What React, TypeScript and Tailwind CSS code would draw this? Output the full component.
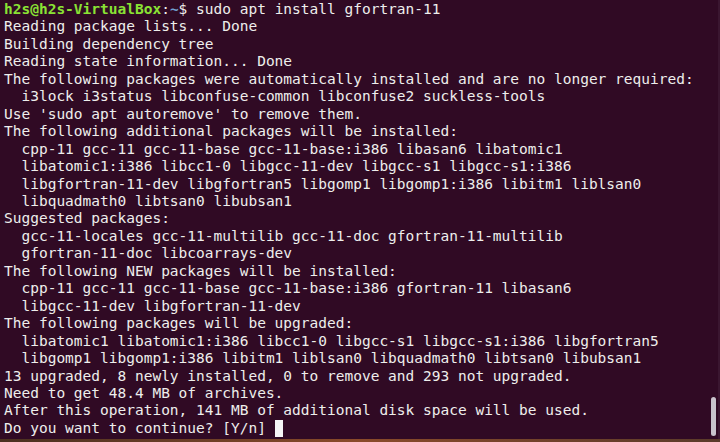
const lines: string[] = [
  "Reading package lists... Done",
  "Building dependency tree",
  "Reading state information... Done",
  "The following packages were automatically installed and are no longer required:",
  "  i3lock i3status libconfuse-common libconfuse2 suckless-tools",
  "Use 'sudo apt autoremove' to remove them.",
  "The following additional packages will be installed:",
  "  cpp-11 gcc-11 gcc-11-base gcc-11-base:i386 libasan6 libatomic1",
  "  libatomic1:i386 libcc1-0 libgcc-11-dev libgcc-s1 libgcc-s1:i386",
  "  libgfortran-11-dev libgfortran5 libgomp1 libgomp1:i386 libitm1 liblsan0",
  "  libquadmath0 libtsan0 libubsan1",
  "Suggested packages:",
  "  gcc-11-locales gcc-11-multilib gcc-11-doc gfortran-11-multilib",
  "  gfortran-11-doc libcoarrays-dev",
  "The following NEW packages will be installed:",
  "  cpp-11 gcc-11 gcc-11-base gcc-11-base:i386 gfortran-11 libasan6",
  "  libgcc-11-dev libgfortran-11-dev",
  "The following packages will be upgraded:",
  "  libatomic1 libatomic1:i386 libcc1-0 libgcc-s1 libgcc-s1:i386 libgfortran5",
  "  libgomp1 libgomp1:i386 libitm1 liblsan0 libquadmath0 libtsan0 libubsan1",
  "13 upgraded, 8 newly installed, 0 to remove and 293 not upgraded.",
  "Need to get 48.4 MB of archives.",
  "After this operation, 141 MB of additional disk space will be used.",
];

const App = () => {
  return (
    <div className="w-[720px] h-[442px] flex flex-col bg-[#300a24] overflow-hidden">
      {/* TERMINAL */}
      <div className="relative h-[439px] pt-[1px] pl-[4px] text-[14.5px] leading-[17.45px] text-[#eeeeec] font-['DejaVu_Sans_Mono',monospace] whitespace-pre">
        <div>
          <span className="text-[#8ae234] font-bold">h2s@h2s-VirtualBox</span>
          <span>:</span>
          <span className="text-[#729fcf] font-bold">~</span>
          <span>$ sudo apt install gfortran-11</span>
        </div>
        {lines.map((line, i) => (
          <div key={i}>{line}</div>
        ))}
        <div className="flex items-center">
          <span>Do you want to continue? [Y/n] </span>
          <span className="inline-block w-[8.75px] h-[17px] bg-[#f5f5f5]" />
        </div>
        {/* SCROLLBAR */}
        <div className="absolute right-[4px] bottom-[3px] w-[5px] h-[39px] rounded-full bg-[#c9c3cc]" />
        <div className="absolute right-0 top-0 w-[2px] h-full bg-[#3a1630]" />
      </div>
      {/* DESKTOP EDGE */}
      <div className="h-[3px] bg-gradient-to-r from-[#4a3020] via-[#8a4a2a] to-[#5a3a2a]" />
    </div>
  );
};

export default App;
